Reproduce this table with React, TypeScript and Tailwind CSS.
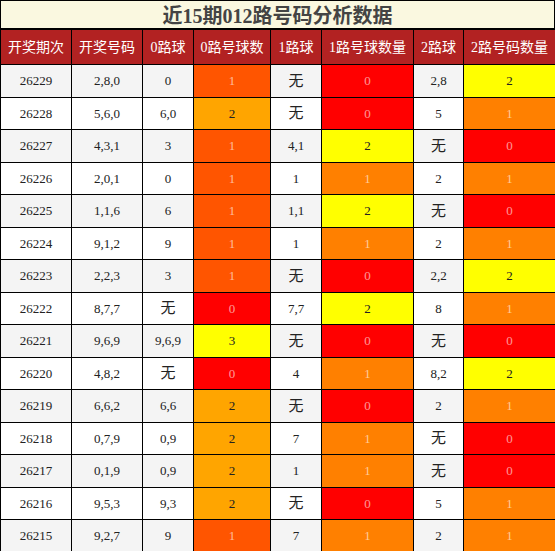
const serif = "font-['Liberation_Serif','Noto_Sans_CJK_SC',serif]";

const data: string[][] = [
  ["26229", "2,8,0", "0", "1", "无", "0", "2,8", "2"],
  ["26228", "5,6,0", "6,0", "2", "无", "0", "5", "1"],
  ["26227", "4,3,1", "3", "1", "4,1", "2", "无", "0"],
  ["26226", "2,0,1", "0", "1", "1", "1", "2", "1"],
  ["26225", "1,1,6", "6", "1", "1,1", "2", "无", "0"],
  ["26224", "9,1,2", "9", "1", "1", "1", "2", "1"],
  ["26223", "2,2,3", "3", "1", "无", "0", "2,2", "2"],
  ["26222", "8,7,7", "无", "0", "7,7", "2", "8", "1"],
  ["26221", "9,6,9", "9,6,9", "3", "无", "0", "无", "0"],
  ["26220", "4,8,2", "无", "0", "4", "1", "8,2", "2"],
  ["26219", "6,6,2", "6,6", "2", "无", "0", "2", "1"],
  ["26218", "0,7,9", "0,9", "2", "7", "1", "无", "0"],
  ["26217", "0,1,9", "0,9", "2", "1", "1", "无", "0"],
  ["26216", "9,5,3", "9,3", "2", "无", "0", "5", "1"],
  ["26215", "9,2,7", "9", "1", "7", "1", "2", "1"],
];

const headers = ["开奖期次", "开奖号码", "0路球", "0路号球数", "1路球", "1路号球数量", "2路球", "2路号码数量"];
const widths = ["w-[71px]", "w-[71px]", "w-[51px]", "w-[77px]", "w-[51px]", "w-[92px]", "w-[50px]", "w-[92px]"];

// 0路 column uses its own scale, 1路 / 2路 share one
const zeroColors: Record<string, string> = {
  "0": "bg-[#ff0000] text-white/60",
  "1": "bg-[#ff5500] text-white/60",
  "2": "bg-[#ffa500] text-[#222]",
  "3": "bg-[#ffff00] text-[#222]",
};
const otherColors: Record<string, string> = {
  "0": "bg-[#ff0000] text-white/60",
  "1": "bg-[#ff8000] text-white/60",
  "2": "bg-[#ffff00] text-[#222]",
};

function cellClass(col: number, v: string) {
  if (col === 3) return zeroColors[v];
  if (col === 5 || col === 7) return otherColors[v];
  return "text-[#222]";
}

export default function App() {
  return (
    <div className={`w-[555px] ${serif}`}>
      <div className="h-[29px] border border-black bg-[#faf8e0] flex items-center justify-center pt-[2px] text-[20px] font-bold text-[#444] leading-none">
        近15期012路号码分析数据
      </div>
      <table className="w-[555px] table-fixed border-collapse border border-black">
        <thead>
          <tr className="h-[35px] bg-[#b22222] text-white text-[14px]">
            {headers.map((h, i) => (
              <th key={h} className={`${widths[i]} border border-black font-normal p-0`}>
                {h}
              </th>
            ))}
          </tr>
        </thead>
        <tbody>
          {data.map((row, r) => (
            <tr key={row[0]} className={`h-[32.5px] ${r % 2 === 0 ? "bg-[#f4f4f4]" : "bg-white"}`}>
              {row.map((v, c) => (
                <td
                  key={c}
                  className={`border border-black text-center p-0 ${cellClass(c, v)} ${
                    v === "无" ? "text-[15px]" : "text-[13px]"
                  }`}
                >
                  {v}
                </td>
              ))}
            </tr>
          ))}
        </tbody>
      </table>
    </div>
  );
}
